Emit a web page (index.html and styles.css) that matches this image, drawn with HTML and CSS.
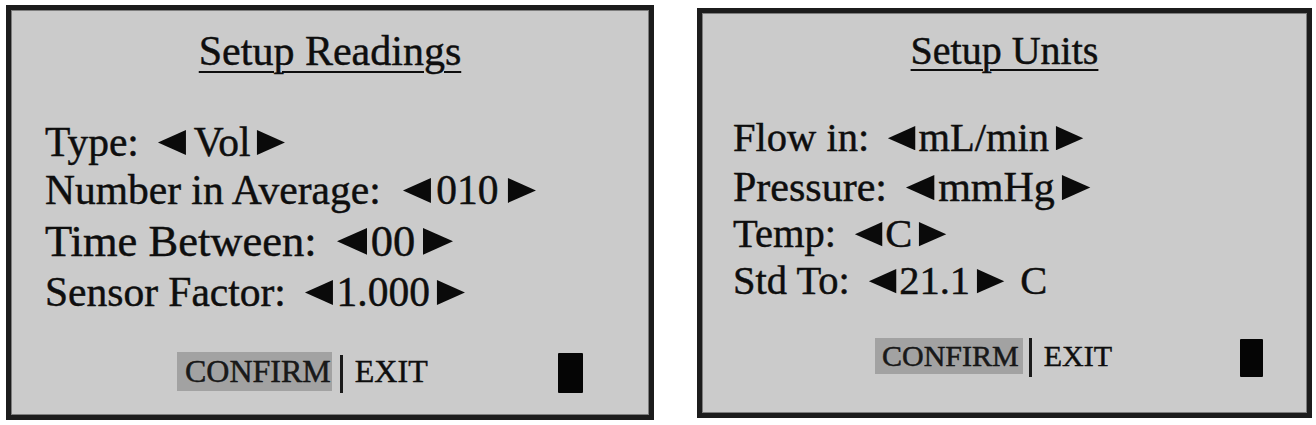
FILE: index.html
```html
<!DOCTYPE html>
<html>
<head>
<meta charset="utf-8">
<link rel="stylesheet" href="styles.css">
</head>
<body>
<div class="page">
  <section class="panel panel-a">
    <div class="title"><span class="title-text">Setup Readings</span></div>
    <div class="rows">
      <div class="row r-a1"><span class="lbl">Type:</span><span class="val"><svg class="tri" viewBox="0 0 27 24"><path d="M27 0V24L0 12Z"/></svg><span class="v v-vol">Vol</span><svg class="tri" viewBox="0 0 27 24"><path d="M0 0V24L27 12Z"/></svg></span></div>
      <div class="row r-a2"><span class="lbl">Number in Average:</span><span class="val val-wide"><svg class="tri" viewBox="0 0 27 24"><path d="M27 0V24L0 12Z"/></svg><span class="v v-num">010</span><svg class="tri" viewBox="0 0 27 24"><path d="M0 0V24L27 12Z"/></svg></span></div>
      <div class="row r-a3"><span class="lbl">Time Between:</span><span class="val"><svg class="tri" viewBox="0 0 27 24"><path d="M27 0V24L0 12Z"/></svg><span class="v">00</span><svg class="tri" viewBox="0 0 27 24"><path d="M0 0V24L27 12Z"/></svg></span></div>
      <div class="row r-a4"><span class="lbl">Sensor Factor:</span><span class="val"><svg class="tri" viewBox="0 0 27 24"><path d="M27 0V24L0 12Z"/></svg><span class="v">1.000</span><svg class="tri" viewBox="0 0 27 24"><path d="M0 0V24L27 12Z"/></svg></span></div>
    </div>
    <div class="footer">
      <span class="confirm">CONFIRM</span>
      <span class="divider"></span>
      <span class="exit">EXIT</span>
      <span class="block"></span>
    </div>
  </section>

  <section class="panel panel-b">
    <div class="title"><span class="title-text">Setup Units</span></div>
    <div class="rows">
      <div class="row r-b1"><span class="lbl">Flow in:</span><span class="val"><svg class="tri" viewBox="0 0 27 24"><path d="M27 0V24L0 12Z"/></svg><span class="v">mL/min</span><svg class="tri" viewBox="0 0 27 24"><path d="M0 0V24L27 12Z"/></svg></span></div>
      <div class="row r-b2"><span class="lbl">Pressure:</span><span class="val"><svg class="tri" viewBox="0 0 27 24"><path d="M27 0V24L0 12Z"/></svg><span class="v">mmHg</span><svg class="tri" viewBox="0 0 27 24"><path d="M0 0V24L27 12Z"/></svg></span></div>
      <div class="row r-b3"><span class="lbl">Temp:</span><span class="val"><svg class="tri" viewBox="0 0 27 24"><path d="M27 0V24L0 12Z"/></svg><span class="v">C</span><svg class="tri" viewBox="0 0 27 24"><path d="M0 0V24L27 12Z"/></svg></span></div>
      <div class="row r-b4"><span class="lbl">Std To:</span><span class="val"><svg class="tri" viewBox="0 0 27 24"><path d="M27 0V24L0 12Z"/></svg><span class="v">21.1</span><svg class="tri" viewBox="0 0 27 24"><path d="M0 0V24L27 12Z"/></svg><span class="unit">C</span></span></div>
    </div>
    <div class="footer">
      <span class="confirm">CONFIRM</span>
      <span class="divider"></span>
      <span class="exit">EXIT</span>
      <span class="block"></span>
    </div>
  </section>
</div>
</body>
</html>
```

FILE: styles.css
```css
html, body {
  margin: 0;
  padding: 0;
  background: #ffffff;
}

.page {
  display: flex;
  align-items: flex-start;
  width: 1316px;
  height: 425px;
  font-family: "Liberation Serif", "Times New Roman", serif;
  color: #0e0e0e;
  -webkit-text-stroke: 0.45px #0e0e0e;
}

.panel {
  box-sizing: border-box;
  display: flex;
  flex-direction: column;
  background: #cbcbcb;
  border: 5px solid #1c1c1c;
  box-shadow: inset 0 0 0 1px #7d7d7d;
}

.panel-a {
  margin-left: 6px;
  margin-top: 5px;
  width: 648px;
  height: 415px;
}

.panel-b {
  margin-left: 43px;
  margin-top: 8px;
  width: 615px;
  height: 410px;
}

.title {
  text-align: center;
  white-space: nowrap;
}

.title-text {
  text-decoration: underline;
  text-decoration-thickness: 2px;
}

.panel-a .title {
  padding-top: 16px;
  font-size: 42px;
  line-height: 50px;
}

.panel-a .title-text {
  text-underline-offset: 6px;
}

.panel-b .title {
  padding-top: 14px;
  font-size: 40px;
  line-height: 48px;
}

.panel-b .title-text {
  text-underline-offset: 5px;
}

.rows {
  display: flex;
  flex-direction: column;
  white-space: nowrap;
}

.panel-a .rows {
  padding-left: 34px;
  margin-top: 42px;
}

.panel-b .rows {
  padding-left: 31px;
  margin-top: 39px;
}

.row {
  display: block;
}

.val {
  margin-left: 0.44em;
}

.val-wide {
  margin-left: 0.52em;
}

.tri {
  width: 0.72em;
  height: 0.6em;
  vertical-align: 0.02em;
  fill: #0a0a0a;
}

.v {
  margin: 0 0.14em 0 0.06em;
}

.v-vol {
  margin-left: 0.16em;
}

.v-num {
  margin: 0 0.2em 0 0.1em;
}

.unit {
  margin-left: 0.38em;
}

.r-a1 { font-size: 41.5px; line-height: 48px; }
.r-a2 { font-size: 41.5px; line-height: 48px; }
.r-a3 { font-size: 44.5px; line-height: 55px; }
.r-a4 { font-size: 41.5px; line-height: 46px; }

.r-b1 { font-size: 40.5px; line-height: 48px; }
.r-b2 { font-size: 42px; line-height: 50.4px; }
.r-b3 { font-size: 40.5px; line-height: 44px; }
.r-b4 { font-size: 40.5px; line-height: 49.7px; }

.footer {
  display: flex;
  align-items: flex-start;
  white-space: nowrap;
}

.panel-a .footer {
  margin-top: 37px;
  padding-left: 166px;
  padding-right: 66px;
  font-size: 32px;
}

.panel-b .footer {
  margin-top: 32px;
  padding-left: 173px;
  padding-right: 44px;
  font-size: 30px;
}

.confirm {
  background: #a2a2a2;
  color: #1a1a1a;
}

.panel-a .confirm {
  height: 39px;
  line-height: 39px;
  padding: 0 1px 0 8px;
}

.panel-b .confirm {
  height: 36px;
  line-height: 36px;
  padding: 0 4px 0 7px;
}

.divider {
  width: 3px;
  background: #1a1a1a;
}

.panel-a .divider {
  height: 38px;
  margin: 3px 12px 0 8px;
}

.panel-b .divider {
  height: 39px;
  margin: 0 12px 0 6px;
}

.panel-a .exit {
  line-height: 39px;
}

.panel-b .exit {
  line-height: 36px;
}

.block {
  margin-left: auto;
  background: #050505;
  border-radius: 1px;
}

.panel-a .block {
  width: 25px;
  height: 40px;
  margin-top: 1px;
}

.panel-b .block {
  width: 23px;
  height: 38px;
  margin-top: 1px;
}
```
